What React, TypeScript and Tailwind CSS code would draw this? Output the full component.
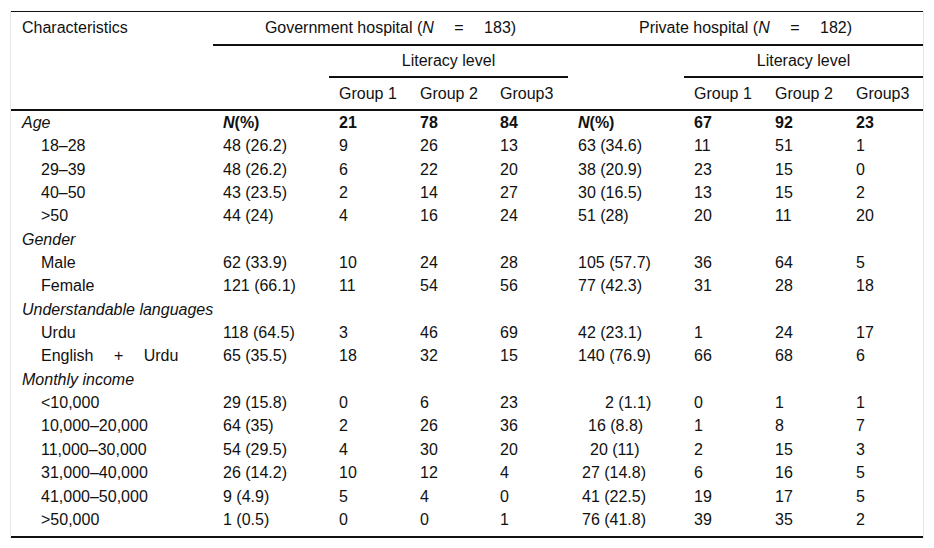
import React from 'react'

type Row =
  | { kind: 'cat'; label: string }
  | { kind: 'row'; label: React.ReactNode; g: string[]; p: string[]; pPad?: string }

const rows: Row[] = [
  { kind: 'cat', label: 'Age' },
  { kind: 'row', label: '18–28', g: ['48 (26.2)', '9', '26', '13'], p: ['63 (34.6)', '11', '51', '1'] },
  { kind: 'row', label: '29–39', g: ['48 (26.2)', '6', '22', '20'], p: ['38 (20.9)', '23', '15', '0'] },
  { kind: 'row', label: '40–50', g: ['43 (23.5)', '2', '14', '27'], p: ['30 (16.5)', '13', '15', '2'] },
  { kind: 'row', label: '>50', g: ['44 (24)', '4', '16', '24'], p: ['51 (28)', '20', '11', '20'] },
  { kind: 'cat', label: 'Gender' },
  { kind: 'row', label: 'Male', g: ['62 (33.9)', '10', '24', '28'], p: ['105 (57.7)', '36', '64', '5'] },
  { kind: 'row', label: 'Female', g: ['121 (66.1)', '11', '54', '56'], p: ['77 (42.3)', '31', '28', '18'] },
  { kind: 'cat', label: 'Understandable languages' },
  { kind: 'row', label: 'Urdu', g: ['118 (64.5)', '3', '46', '69'], p: ['42 (23.1)', '1', '24', '17'] },
  {
    kind: 'row',
    label: (
      <>
        English <span className="px-[16px]">+</span> Urdu
      </>
    ),
    g: ['65 (35.5)', '18', '32', '15'],
    p: ['140 (76.9)', '66', '68', '6'],
  },
  { kind: 'cat', label: 'Monthly income' },
  { kind: 'row', label: '<10,000', g: ['29 (15.8)', '0', '6', '23'], p: ['2 (1.1)', '0', '1', '1'], pPad: 'pl-[37px]' },
  { kind: 'row', label: '10,000–20,000', g: ['64 (35)', '2', '26', '36'], p: ['16 (8.8)', '1', '8', '7'], pPad: 'pl-[20px]' },
  { kind: 'row', label: '11,000–30,000', g: ['54 (29.5)', '4', '30', '20'], p: ['20 (11)', '2', '15', '3'], pPad: 'pl-[22px]' },
  { kind: 'row', label: '31,000–40,000', g: ['26 (14.2)', '10', '12', '4'], p: ['27 (14.8)', '6', '16', '5'], pPad: 'pl-[14px]' },
  { kind: 'row', label: '41,000–50,000', g: ['9 (4.9)', '5', '4', '0'], p: ['41 (22.5)', '19', '17', '5'], pPad: 'pl-[14px]' },
  { kind: 'row', label: '>50,000', g: ['1 (0.5)', '0', '0', '1'], p: ['76 (41.8)', '39', '35', '2'], pPad: 'pl-[14px]' },
]

const NEq = ({ n }: { n: string }) => (
  <>
    (<i>N</i> <span className="px-[16px]">=</span> {n})
  </>
)

export default function App() {
  return (
    <div className="min-h-screen bg-white pt-[11px] pl-[10px] font-['Liberation_Sans',Arial,sans-serif] text-[16px] text-[#111]">
      <div className="w-[914px] border-x border-[#e6e6e6]">
        <table className="w-[912px] table-fixed border-separate border-spacing-0 border-t border-b-2 border-[#111]">
          <colgroup>
            <col className="w-[202px]" />
            <col className="w-[116px]" />
            <col className="w-[81px]" />
            <col className="w-[80px]" />
            <col className="w-[78px]" />
            <col className="w-[116px]" />
            <col className="w-[81px]" />
            <col className="w-[81px]" />
            <col className="w-[77px]" />
          </colgroup>
          <thead>
            <tr>
              <td className="pl-[11px] pr-[10px] py-[7px] leading-[18px] align-top">Characteristics</td>
              <td colSpan={4} className="py-[7px] leading-[18px] text-center border-b-2 border-[#111] align-top">
                Government hospital <NEq n="183" />
              </td>
              <td colSpan={4} className="py-[7px] leading-[18px] text-center border-b-2 border-[#111] align-top">
                Private hospital <NEq n="182" />
              </td>
            </tr>
            <tr>
              <td colSpan={2}></td>
              <td colSpan={3} className="pt-[6px] pb-[6px] leading-[18px] text-center border-b-2 border-[#111] align-top">
                Literacy level
              </td>
              <td></td>
              <td colSpan={3} className="pt-[6px] pb-[6px] leading-[18px] text-center border-b-2 border-[#111] align-top">
                Literacy level
              </td>
            </tr>
            <tr>
              {['', '', 'Group 1', 'Group 2', 'Group3', '', 'Group 1', 'Group 2', 'Group3'].map((h, i) => (
                <td key={i} className="px-[10px] pt-[7px] pb-[6px] leading-[18px] border-b-2 border-[#111] align-top">
                  {h}
                </td>
              ))}
            </tr>
          </thead>
          <tbody>
            {rows.map((r, i) => {
              const last = i === rows.length - 1
              const td = `px-[10px] pt-[2px] leading-[19.35px] align-top ${last ? 'pb-[7px]' : 'pb-[2px]'}`
              if (r.kind === 'cat') {
                if (r.label === 'Age') {
                  return (
                    <tr key={i}>
                      <td className={`${td} pl-[11px] italic`}>Age</td>
                      <td className={`${td} font-bold`}>
                        <i>N</i>(%)
                      </td>
                      <td className={`${td} font-bold`}>21</td>
                      <td className={`${td} font-bold`}>78</td>
                      <td className={`${td} font-bold`}>84</td>
                      <td className={`${td} font-bold`}>
                        <i>N</i>(%)
                      </td>
                      <td className={`${td} font-bold`}>67</td>
                      <td className={`${td} font-bold`}>92</td>
                      <td className={`${td} font-bold`}>23</td>
                    </tr>
                  )
                }
                return (
                  <tr key={i}>
                    <td colSpan={9} className={`${td} pl-[11px] italic`}>
                      {r.label}
                    </td>
                  </tr>
                )
              }
              return (
                <tr key={i}>
                  <td className={`${td} pl-[30px]`}>{r.label}</td>
                  {r.g.map((v, j) => (
                    <td key={'g' + j} className={td}>
                      {v}
                    </td>
                  ))}
                  {r.p.map((v, j) => (
                    <td key={'p' + j} className={`${td} ${j === 0 && r.pPad ? r.pPad : ''}`}>
                      {v}
                    </td>
                  ))}
                </tr>
              )
            })}
          </tbody>
        </table>
      </div>
    </div>
  )
}
